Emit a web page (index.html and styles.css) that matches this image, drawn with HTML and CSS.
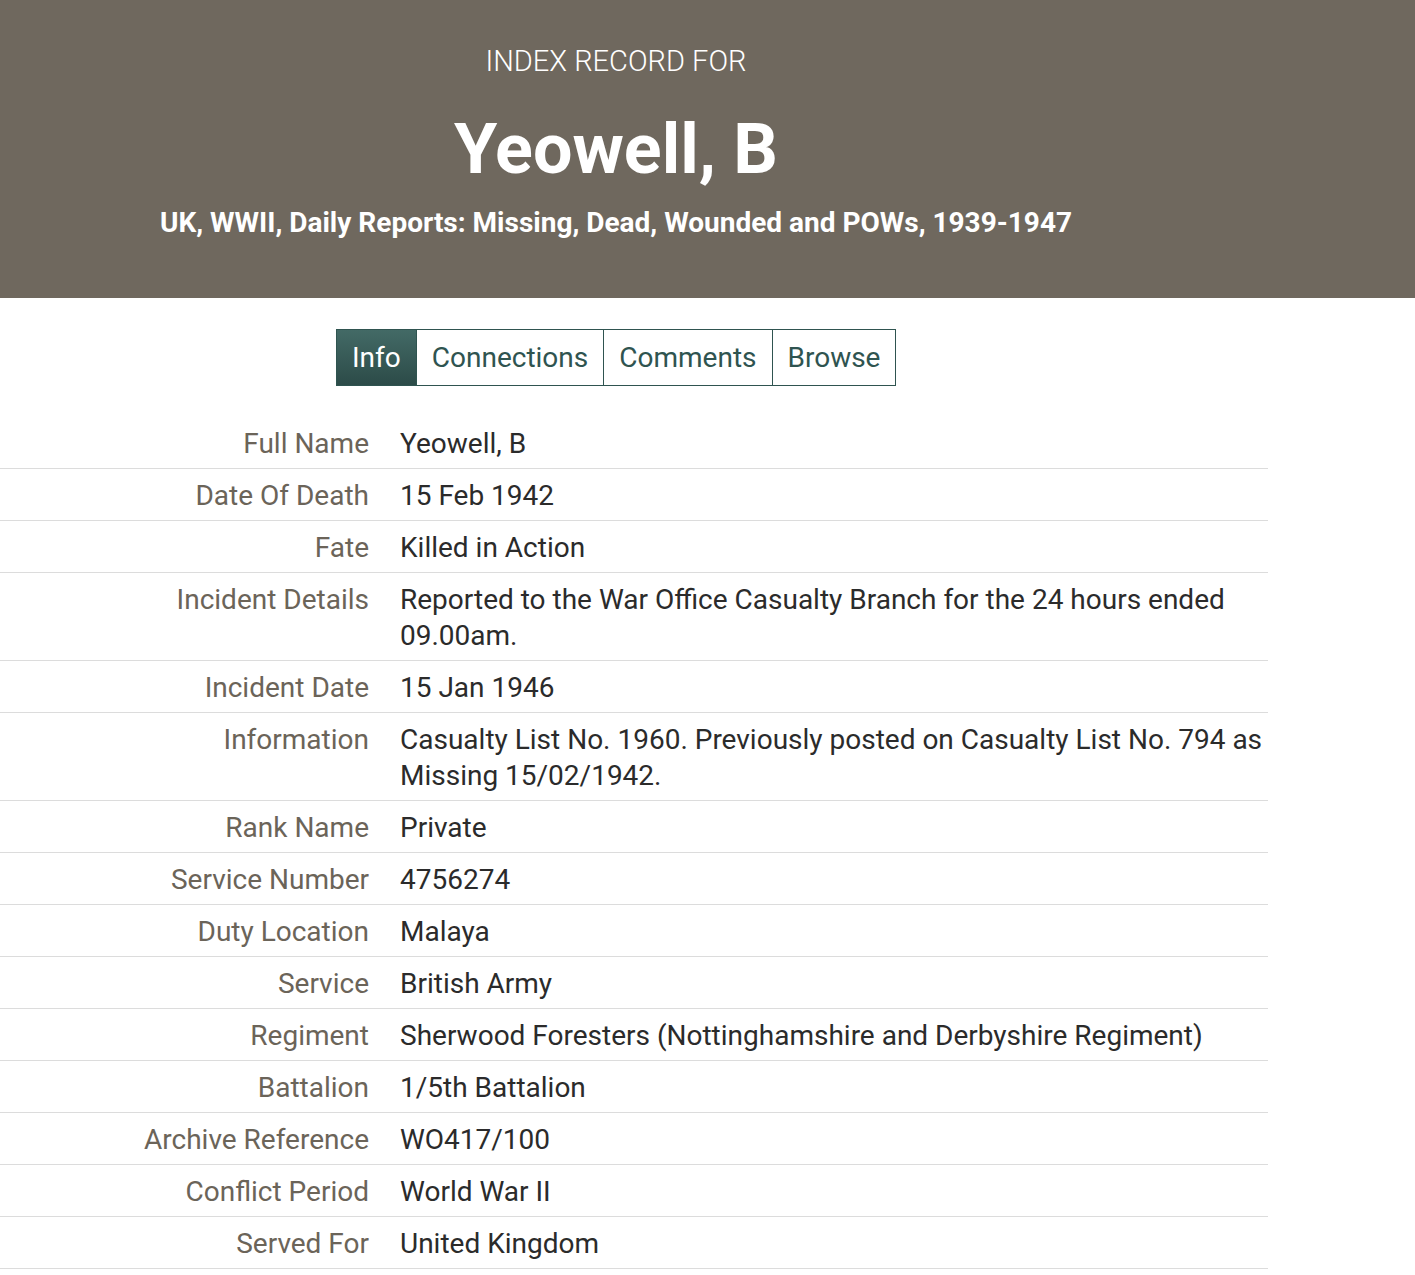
FILE: index.html
```html
<!DOCTYPE html>
<html lang="en">
<head>
  <meta charset="UTF-8" />
  <meta name="viewport" content="width=device-width, initial-scale=1">
  <title>Yeowell, B - Index Record</title>
  <link rel="stylesheet" href="styles.css">
</head>
<body>

  <!-- RECORD HEADER -->
  <header class="record-header">
    <div class="header-inner">
      <p class="kicker">INDEX RECORD FOR</p>
      <h1>Yeowell, B</h1>
      <h2>UK, WWII, Daily Reports: Missing, Dead, Wounded and POWs, 1939-1947</h2>
    </div>
  </header>

  <!-- TABS -->
  <nav class="tabs">
    <a href="#" class="tab active">Info</a>
    <a href="#" class="tab">Connections</a>
    <a href="#" class="tab">Comments</a>
    <a href="#" class="tab">Browse</a>
  </nav>

  <!-- RECORD FIELDS -->
  <table class="record">
    <tbody>
      <tr><th>Full Name</th><td>Yeowell, B</td></tr>
      <tr><th>Date Of Death</th><td>15 Feb 1942</td></tr>
      <tr><th>Fate</th><td>Killed in Action</td></tr>
      <tr><th>Incident Details</th><td>Reported to the War Office Casualty Branch for the 24 hours ended 09.00am.</td></tr>
      <tr><th>Incident Date</th><td>15 Jan 1946</td></tr>
      <tr><th>Information</th><td>Casualty List No. 1960. Previously posted on Casualty List No. 794 as Missing 15/02/1942.</td></tr>
      <tr><th>Rank Name</th><td>Private</td></tr>
      <tr><th>Service Number</th><td>4756274</td></tr>
      <tr><th>Duty Location</th><td>Malaya</td></tr>
      <tr><th>Service</th><td>British Army</td></tr>
      <tr><th>Regiment</th><td>Sherwood Foresters (Nottinghamshire and Derbyshire Regiment)</td></tr>
      <tr><th>Battalion</th><td>1/5th Battalion</td></tr>
      <tr><th>Archive Reference</th><td>WO417/100</td></tr>
      <tr><th>Conflict Period</th><td>World War II</td></tr>
      <tr><th>Served For</th><td>United Kingdom</td></tr>
    </tbody>
  </table>

</body>
</html>
```

FILE: styles.css
```css
body {
  font-family: Roboto, 'Liberation Sans', sans-serif;
  background: white;
  margin: 0;
  color: #2b2b2b;
}

.record-header {
  background: #6f685e;
  color: white;
  height: 298px;
  box-sizing: border-box;
  padding-top: 43px;
}

.header-inner {
  width: 1232px;
  text-align: center;
}

.kicker {
  margin: 0;
  font-size: 29px;
  font-weight: 300;
  line-height: 36px;
}

h1 {
  margin: 28px 0 0;
  font-size: 70px;
  font-weight: 700;
  line-height: 84px;
}

h2 {
  margin: 14px 0 0;
  font-size: 28px;
  font-weight: 700;
  line-height: 36px;
}

.tabs {
  display: flex;
  margin: 31px 0 0 336px;
}

.tab {
  display: block;
  padding: 0 15px;
  height: 55px;
  line-height: 55px;
  font-size: 28px;
  color: #2f5450;
  text-decoration: none;
  border: 1px solid #2f5450;
  border-left: none;
}

.tab:first-child {
  border-left: 1px solid #2f5450;
}

.tab.active {
  background: linear-gradient(#436a66, #2c4b48);
  color: white;
}

.record {
  width: 1268px;
  border-collapse: collapse;
  margin-top: 31px;
}

.record th, .record td {
  padding: 9px 0 6px;
  font-size: 28px;
  line-height: 36px;
  border-bottom: 1px solid #dcdcdc;
  vertical-align: top;
}

.record th {
  width: 369px;
  text-align: right;
  font-weight: 400;
  color: #6b6459;
}

.record td {
  padding-left: 31px;
}
```
